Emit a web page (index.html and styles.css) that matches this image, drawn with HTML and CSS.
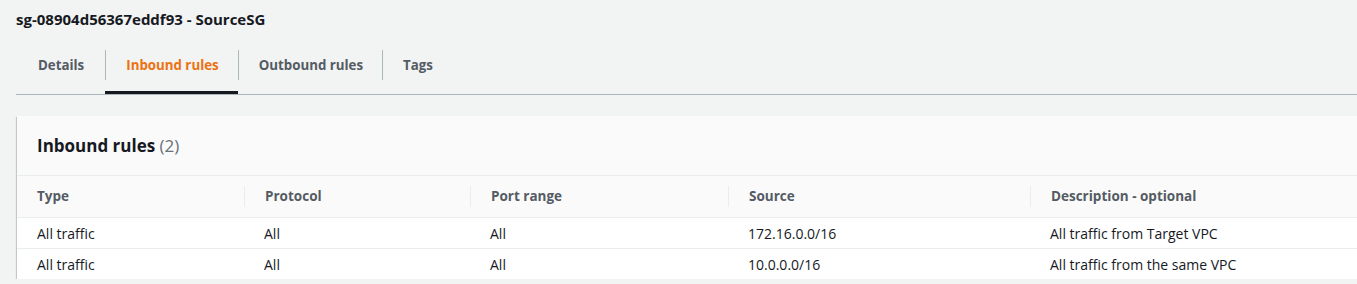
FILE: index.html
```html
<!DOCTYPE html>
<html lang="en">
<head>
    <meta charset="UTF-8">
    <title>sg-08904d56367eddf93 - SourceSG</title>
    <link rel="stylesheet" href="styles.css">
</head>
<body>
    <div class="page">
        <h1 class="sg-title">sg-08904d56367eddf93 - SourceSG</h1>

        <div class="tabs">
            <div class="tab"><span class="tab-label">Details</span></div>
            <div class="tab active"><span class="tab-label">Inbound rules</span></div>
            <div class="tab"><span class="tab-label">Outbound rules</span></div>
            <div class="tab"><span class="tab-label">Tags</span></div>
        </div>

        <div class="panel">
            <div class="panel-header">
                <h2>Inbound rules <span class="count">(2)</span></h2>
            </div>
            <table class="rules">
                <colgroup>
                    <col class="c-type">
                    <col class="c-proto">
                    <col class="c-port">
                    <col class="c-source">
                    <col>
                </colgroup>
                <thead>
                    <tr>
                        <th><span>Type</span></th>
                        <th><span>Protocol</span></th>
                        <th><span>Port range</span></th>
                        <th><span>Source</span></th>
                        <th><span>Description - optional</span></th>
                    </tr>
                </thead>
                <tbody>
                    <tr>
                        <td>All traffic</td>
                        <td>All</td>
                        <td>All</td>
                        <td>172.16.0.0/16</td>
                        <td>All traffic from Target VPC</td>
                    </tr>
                    <tr>
                        <td>All traffic</td>
                        <td>All</td>
                        <td>All</td>
                        <td>10.0.0.0/16</td>
                        <td>All traffic from the same VPC</td>
                    </tr>
                </tbody>
            </table>
        </div>
    </div>
</body>
</html>
```

FILE: styles.css
```css
body {
    margin: 0;
    background-color: #f2f3f3;
    font-family: 'Open Sans', sans-serif;
    color: #16191f;
    overflow: hidden;
}

.page {
    padding: 8px 0 0 16px;
}

.sg-title {
    margin: 0;
    font-size: 15px;
    line-height: 22px;
    font-weight: 700;
}

/* tabs */
.tabs {
    display: flex;
    margin-top: 20px;
    border-bottom: 1px solid #aab7b8;
}

.tab {
    height: 44px;
    box-sizing: border-box;
}

.tab-label {
    display: block;
    padding: 0 21px 0 22px;
    line-height: 30px;
    font-size: 13.3px;
    font-weight: 700;
    color: #545b64;
}

.tab + .tab .tab-label {
    border-left: 1px solid #aab7b8;
    padding-left: 20px;
    padding-right: 19px;
}

.tab.active {
    border-bottom: 3px solid #16191f;
}

.tab.active .tab-label {
    color: #ec7211;
}

/* panel */
.panel {
    margin-top: 21px;
    margin-left: 1px;
    width: calc(100% + 20px);
    background: #fff;
    box-shadow: 0 1px 1px 0 rgba(0, 28, 36, 0.3), 1px 1px 1px 0 rgba(0, 28, 36, 0.15), -1px 1px 1px 0 rgba(0, 28, 36, 0.15);
}

.panel-header {
    background: #fafafa;
    border-bottom: 1px solid #eaeded;
    height: 59px;
    padding: 0 20px;
    display: flex;
    align-items: center;
}

.panel-header h2 {
    margin: 0;
    font-size: 17px;
    font-weight: 700;
}

.count {
    font-weight: 400;
    color: #687078;
}

.rules {
    width: 100%;
    border-collapse: collapse;
    table-layout: fixed;
    font-size: 14px;
}

.c-type { width: 227px; }
.c-proto { width: 226px; }
.c-port { width: 258px; }
.c-source { width: 302px; }

.rules th {
    background: #fafafa;
    height: 41px;
    padding: 0;
    text-align: left;
    font-size: 13.5px;
    font-weight: 700;
    color: #545b64;
    border-bottom: 1px solid #eaeded;
}

.rules th span {
    display: block;
    padding-left: 20px;
    line-height: 21px;
}

.rules th + th span {
    border-left: 1px solid #eaeded;
}

.rules td {
    height: 30px;
    padding: 0 0 0 20px;
    border-bottom: 1px solid #eaeded;
}

.rules tbody tr:last-child td {
    border-bottom: none;
}
```
